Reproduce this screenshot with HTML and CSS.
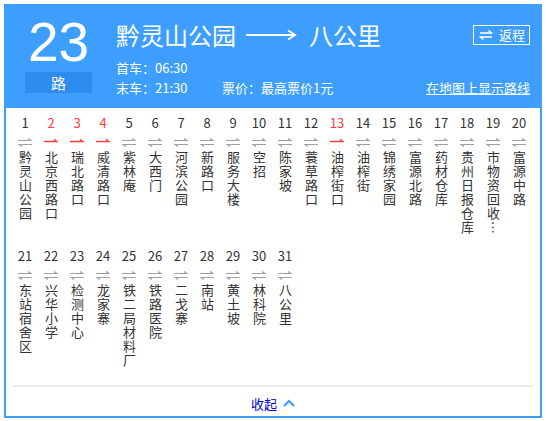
FILE: index.html
```html
<!DOCTYPE html>
<html lang="zh-CN">
<head>
    <meta charset="UTF-8">
    <meta name="viewport" content="width=device-width, initial-scale=1.0">
    <title>23路 公交线路</title>
    <link rel="stylesheet" href="styles.css">
</head>
<body>

    <div class="linea">
        <div class="cabecera">
            <div class="numero">
                <div class="num">23</div>
                <div class="lu">路</div>
            </div>
            <div class="info">
                <div class="titulo-fila">
                    <h1 class="titulo">黔灵山公园<svg class="flecha" width="52" height="12" viewBox="0 0 52 12"><path d="M1 6H50M43 1.5L50 6L43 10.5" fill="none" stroke="#fff" stroke-width="2"/></svg>八公里</h1>
                    <a class="regreso" href="#"><svg width="14" height="10" viewBox="0 0 14 10"><path d="M1 3H12.5L9.5 0.5M13 7H1.5L4.5 9.5" fill="none" stroke="#fff" stroke-width="1.4"/></svg>返程</a>
                </div>
                <p class="dato">首车：06:30</p>
                <div class="dato fila">
                    <span class="hora">末车：21:30</span>
                    <span>票价：最高票价1元</span>
                    <a class="mapa" href="#">在地图上显示路线</a>
                </div>
            </div>
        </div>

        <ul class="paradas">
            <li><span class="n">1</span><i class="ida"></i><span class="nombre">黔灵山公园</span></li>
            <li class="uno"><span class="n">2</span><i class="sentido"></i><span class="nombre">北京西路口</span></li>
            <li class="uno"><span class="n">3</span><i class="sentido"></i><span class="nombre">瑞北路口</span></li>
            <li class="uno"><span class="n">4</span><i class="sentido"></i><span class="nombre">威清路口</span></li>
            <li><span class="n">5</span><i class="ida"></i><span class="nombre">紫林庵</span></li>
            <li><span class="n">6</span><i class="ida"></i><span class="nombre">大西门</span></li>
            <li><span class="n">7</span><i class="ida"></i><span class="nombre">河滨公园</span></li>
            <li><span class="n">8</span><i class="ida"></i><span class="nombre">新路口</span></li>
            <li><span class="n">9</span><i class="ida"></i><span class="nombre">服务大楼</span></li>
            <li><span class="n">10</span><i class="ida"></i><span class="nombre">空招</span></li>
            <li><span class="n">11</span><i class="ida"></i><span class="nombre">陈家坡</span></li>
            <li><span class="n">12</span><i class="ida"></i><span class="nombre">蓑草路口</span></li>
            <li class="uno"><span class="n">13</span><i class="sentido"></i><span class="nombre">油榨街口</span></li>
            <li><span class="n">14</span><i class="ida"></i><span class="nombre">油榨街</span></li>
            <li><span class="n">15</span><i class="ida"></i><span class="nombre">锦绣家园</span></li>
            <li><span class="n">16</span><i class="ida"></i><span class="nombre">富源北路</span></li>
            <li><span class="n">17</span><i class="ida"></i><span class="nombre">药材仓库</span></li>
            <li><span class="n">18</span><i class="ida"></i><span class="nombre">贵州日报仓库</span></li>
            <li><span class="n">19</span><i class="ida"></i><span class="nombre">市物资回收…</span></li>
            <li><span class="n">20</span><i class="ida"></i><span class="nombre">富源中路</span></li>
            <li><span class="n">21</span><i class="ida"></i><span class="nombre">东站宿舍区</span></li>
            <li><span class="n">22</span><i class="ida"></i><span class="nombre">兴华小学</span></li>
            <li><span class="n">23</span><i class="ida"></i><span class="nombre">检测中心</span></li>
            <li><span class="n">24</span><i class="ida"></i><span class="nombre">龙家寨</span></li>
            <li><span class="n">25</span><i class="ida"></i><span class="nombre">铁二局材料厂</span></li>
            <li><span class="n">26</span><i class="ida"></i><span class="nombre">铁路医院</span></li>
            <li><span class="n">27</span><i class="ida"></i><span class="nombre">二戈寨</span></li>
            <li><span class="n">28</span><i class="ida"></i><span class="nombre">南站</span></li>
            <li><span class="n">29</span><i class="ida"></i><span class="nombre">黄土坡</span></li>
            <li><span class="n">30</span><i class="ida"></i><span class="nombre">林科院</span></li>
            <li><span class="n">31</span><i class="ida"></i><span class="nombre">八公里</span></li>
        </ul>

        <div class="pie">
            <a class="plegar" href="#">收起<svg width="12" height="8" viewBox="0 0 12 8"><path d="M1 7L6 2L11 7" fill="none" stroke="#3e9efe" stroke-width="2.2"/></svg></a>
        </div>
    </div>

</body>
</html>
```

FILE: styles.css
```css
body { margin: 0; font-family: "Noto Sans CJK SC", "Liberation Sans", sans-serif; color: #333; }
a { text-decoration: none; }

.linea { width: 538px; height: 414px; margin: 4px; box-sizing: border-box; border: 2px solid #3e9efe; border-top: 0; }

/* cabecera azul */
.cabecera { display: flex; height: 104px; box-sizing: border-box; margin: 0 -2px; padding: 11px 12px 0 21px; background: #3e9efe; color: #fff; }
.numero { width: 67px; margin-right: 24px; }
.num { font-family: "Liberation Sans", Arial, sans-serif; font-size: 55px; line-height: 54px; text-align: center; }
.lu { height: 21px; margin-top: 3px; line-height: 21px; font-size: 15px; text-align: center; background: #2d8ced; }
.info { flex: 1; }
.titulo-fila { display: flex; align-items: center; justify-content: space-between; margin-top: 5px; }
.titulo { display: flex; align-items: center; margin: 0; font-size: 24px; font-weight: normal; line-height: 30px; }
.flecha { margin: 0 12px 0 9px; }
.regreso { display: flex; align-items: center; gap: 6px; height: 18px; padding: 0 4px 0 5px; border: 1px solid #fff; color: #fff; font-size: 13px; line-height: 18px; }
.dato { margin: 0; font-size: 13px; line-height: 20px; }
p.dato { margin-top: 8px; }
.fila { display: flex; }
.hora { width: 106px; }
.mapa { margin-left: auto; color: #fff; text-decoration: underline; }

/* paradas */
.paradas { display: grid; grid-template-columns: repeat(20, 26px); row-gap: 13px; align-items: start; margin: 0; padding: 7px 0 0 6px; list-style: none; }
.paradas li { display: flex; flex-direction: column; align-items: center; }
.n { font-size: 13px; line-height: 16px; }
.paradas i { display: block; width: 14px; height: 9px; margin: 7px 0 4px; background: url("data:image/svg+xml,%3Csvg xmlns='http://www.w3.org/2000/svg' width='14' height='9'%3E%3Cpath d='M0 2.5H13L10 0.5M14 6.5H1L4 8.5' fill='none' stroke='%23a0a0a0' stroke-width='1.2'/%3E%3C/svg%3E") no-repeat; }
.paradas i.sentido { background: url("data:image/svg+xml,%3Csvg xmlns='http://www.w3.org/2000/svg' width='14' height='9'%3E%3Cpath d='M0 3.5H13L10 1.2' fill='none' stroke='%23ff4040' stroke-width='1.3'/%3E%3C/svg%3E") no-repeat; }
.uno .n { color: #ff4040; }
.nombre { writing-mode: vertical-rl; font-size: 13px; line-height: 16px; letter-spacing: 1px; color: #333; }

/* pie */
.pie { margin: 17px 7px 0; padding-top: 3px; border-top: 2px solid #ececec; height: 26px; display: flex; align-items: center; justify-content: center; }
.plegar { display: flex; align-items: center; gap: 6px; color: #0000cc; font-size: 13px; }
```
